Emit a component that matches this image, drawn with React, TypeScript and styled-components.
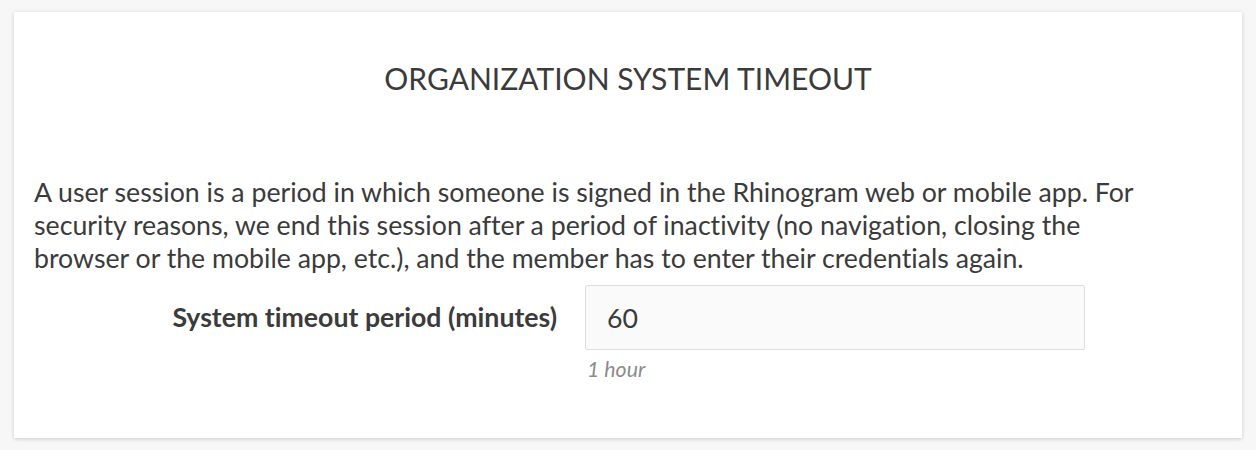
import styled, { createGlobalStyle } from 'styled-components';

const GlobalStyle = createGlobalStyle`
  body {
    margin: 0;
    background: #f7f7f7;
    font-family: Lato, "Open Sans", sans-serif;
    font-variant-ligatures: none;
    color: #3a3a3a;
  }
`;

const Page = styled.div`
  padding: 12px 14px;
`;

const Card = styled.section`
  background: #fff;
  height: 426px;
  box-sizing: border-box;
  box-shadow: 0 1px 4px rgba(0, 0, 0, 0.18);
  padding: 48px 20px 0;
`;

const Title = styled.h2`
  margin: 0;
  text-align: center;
  font-weight: 400;
  font-size: 30px;
  line-height: 36px;
  text-transform: uppercase;
  color: #3b3b3b;
`;

const Description = styled.p`
  margin: 80px 0 0;
  max-width: 1130px;
  font-size: 26.7px;
  line-height: 33px;
  color: #3b3b3b;
`;

const FieldRow = styled.div`
  display: grid;
  grid-template-columns: 523px 500px;
  column-gap: 28px;
  margin-top: 10px;
`;

const Label = styled.label`
  text-align: right;
  font-weight: 700;
  font-size: 26.7px;
  line-height: 65px;
  color: #3b3b3b;
`;

const Input = styled.input`
  box-sizing: border-box;
  width: 500px;
  height: 65px;
  padding: 0 21px;
  border: 1px solid #dedede;
  border-radius: 2px;
  background: #fafafa;
  font-family: inherit;
  font-variant-ligatures: none;
  font-size: 26.7px;
  color: #3b3b3b;
  outline: none;
`;

const Hint = styled.div`
  grid-column: 2;
  padding: 6px 2px 0;
  font-size: 21.3px;
  font-style: italic;
  color: #8c8c8c;
`;

export default function App() {
  return (
    <Page>
      <GlobalStyle />
      <Card>
        <Title>Organization System Timeout</Title>
        <Description>
          A user session is a period in which someone is signed in the Rhinogram web or mobile app. For
          security reasons, we end this session after a period of inactivity (no navigation, closing the
          browser or the mobile app, etc.), and the member has to enter their credentials again.
        </Description>
        <FieldRow>
          <Label htmlFor="timeout">System timeout period (minutes)</Label>
          <Input id="timeout" defaultValue="60" />
          <Hint>1 hour</Hint>
        </FieldRow>
      </Card>
    </Page>
  );
}
